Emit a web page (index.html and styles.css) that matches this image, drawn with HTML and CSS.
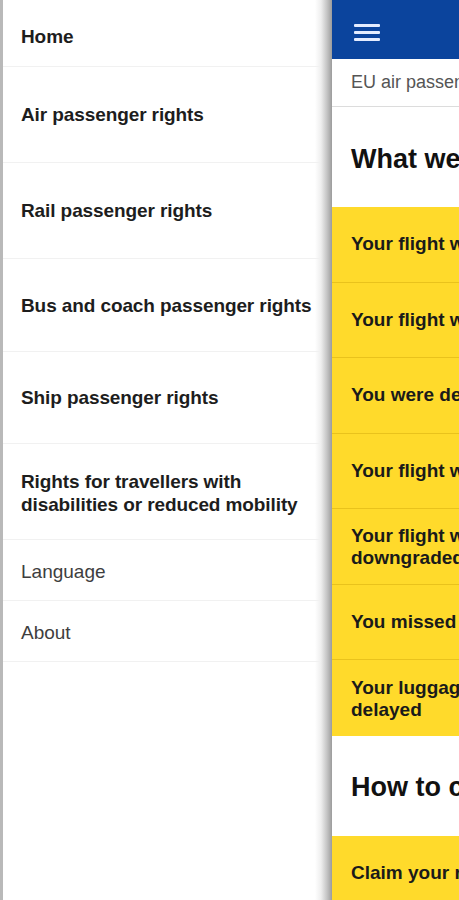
FILE: index.html
```html
<!DOCTYPE html>
<html lang="en">
<head>
<meta charset="utf-8">
<title>EU passenger rights</title>
<link rel="stylesheet" href="styles.css">
</head>
<body>
<div class="screen">
  <nav class="drawer">
    <a class="item bold home">Home</a>
    <a class="item bold h96">Air passenger rights</a>
    <a class="item bold h96">Rail passenger rights</a>
    <a class="item bold h94">Bus and coach passenger rights</a>
    <a class="item bold h92">Ship passenger rights</a>
    <a class="item bold h96 two">Rights for travellers with<br>disabilities or reduced mobility</a>
    <a class="item small">Language</a>
    <a class="item small">About</a>
  </nav>
  <main class="main">
    <header class="topbar">
      <svg class="burger" width="26" height="18" viewBox="0 0 26 18">
        <rect x="0" y="0" width="26" height="3" rx="1" fill="#e4ecff"/>
        <rect x="0" y="7" width="26" height="3" rx="1" fill="#e4ecff"/>
        <rect x="0" y="14" width="26" height="3" rx="1" fill="#e4ecff"/>
      </svg>
    </header>
    <div class="crumb">EU air passenger rights</div>
    <h2 class="section">What we can do for you</h2>
    <ul class="cards">
      <li class="card">Your flight was delayed</li>
      <li class="card">Your flight was cancelled</li>
      <li class="card">You were denied boarding</li>
      <li class="card">Your flight was rerouted</li>
      <li class="card two">Your flight was upgraded or<br>downgraded</li>
      <li class="card">You missed a connecting flight</li>
      <li class="card two">Your luggage was lost, damaged or<br>delayed</li>
    </ul>
    <h2 class="section">How to claim your rights</h2>
    <ul class="cards">
      <li class="card">Claim your rights</li>
    </ul>
  </main>
</div>
</body>
</html>
```

FILE: styles.css
```css
html, body {
  margin: 0;
  padding: 0;
  overflow: hidden;
  background: #fff;
}
body {
  font-family: "Liberation Sans", Arial, sans-serif;
  width: 459px;
  height: 900px;
}
.screen {
  display: flex;
  width: 459px;
  height: 900px;
  overflow: hidden;
}
.drawer {
  flex: 0 0 329px;
  border-left: 3px solid #b9b9b9;
  display: flex;
  flex-direction: column;
  background: linear-gradient(to right, #fff 0, #fff 312px, #eeeeee 318px, #c4c4c4 324px, #9c9c9c 329px);
}
.item {
  flex-shrink: 0;
  display: flex;
  align-items: center;
  box-sizing: border-box;
  padding-left: 18px;
  margin-right: 12px;
  border-bottom: 1px solid #f1f1f1;
  color: #1d1d1d;
  font-size: 19px;
  line-height: 23px;
  white-space: nowrap;
}
.bold { font-weight: bold; letter-spacing: -0.1px; }
.home { height: 67px; padding-top: 6px; }
.h96 { height: 96px; }
.h94 { height: 93px; }
.h92 { height: 92px; }
.two { padding-top: 2px; }
.small { height: 61px; color: #3e3e3e; padding-top: 2px; }

.main {
  flex: 0 0 400px;
  display: block;
  background: #fff;
}
.topbar {
  height: 59px;
  background: #0b449d;
  display: flex;
  align-items: center;
  padding-left: 22px;
  padding-top: 6px;
  box-sizing: border-box;
}
.burger { display: block; }
.crumb {
  height: 48px;
  box-sizing: border-box;
  border-bottom: 1px solid #dcdcdc;
  display: flex;
  align-items: center;
  padding-left: 19px;
  font-size: 18px;
  color: #555;
  white-space: nowrap;
}
.section {
  margin: 0;
  height: 100px;
  display: flex;
  align-items: center;
  padding-left: 19px;
  padding-top: 4px;
  box-sizing: border-box;
  font-size: 27px;
  font-weight: bold;
  color: #111;
  white-space: nowrap;
}
.cards {
  list-style: none;
  margin: 0;
  padding: 0;
}
.card {
  height: 75.5px;
  box-sizing: border-box;
  background: #ffda2b;
  border-bottom: 1px solid #e9c21c;
  display: flex;
  align-items: center;
  padding-left: 19px;
  font-size: 19px;
  line-height: 22px;
  font-weight: bold;
  color: #1a1a1a;
  white-space: nowrap;
}
.card:last-child { border-bottom: none; }
```
